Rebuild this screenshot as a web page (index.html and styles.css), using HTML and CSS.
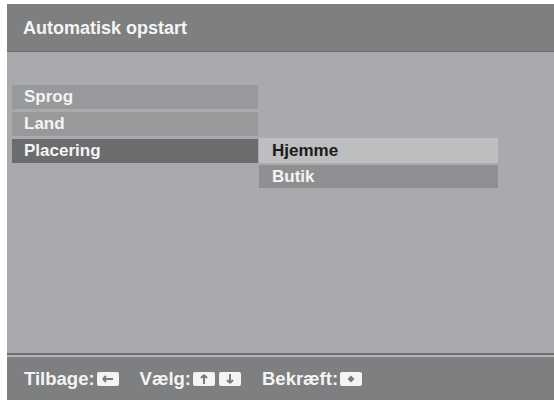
FILE: index.html
```html
<!DOCTYPE html>
<html lang="da">
<head>
    <meta charset="UTF-8">
    <meta name="viewport" content="width=device-width, initial-scale=1.0">
    <title>Automatisk opstart</title>
    <link rel="stylesheet" href="styles.css">
</head>
<body>
    <div class="screen">
        <div class="header">
            <h1>Automatisk opstart</h1>
        </div>
        <div class="content">
            <div class="menu">
                <div class="item">Sprog</div>
                <div class="item">Land</div>
                <div class="item selected">Placering</div>
            </div>
            <div class="submenu">
                <div class="option focus">Hjemme</div>
                <div class="option">Butik</div>
            </div>
        </div>
        <div class="divider"></div>
        <div class="footer">
            <span class="hint">Tilbage:<span class="key">
                <svg width="22" height="14" viewBox="0 0 22 14"><path d="M6 7h10M6 7l3-3M6 7l3 3" stroke="#7a7b7c" stroke-width="2" fill="none"/></svg>
            </span></span>
            <span class="hint">Vælg:<span class="key">
                <svg width="22" height="14" viewBox="0 0 22 14"><path d="M11 3v9M11 3l-3 3M11 3l3 3" stroke="#7a7b7c" stroke-width="2" fill="none"/></svg>
            </span><span class="key">
                <svg width="22" height="14" viewBox="0 0 22 14"><path d="M11 2v9M11 11l-3-3M11 11l3-3" stroke="#7a7b7c" stroke-width="2" fill="none"/></svg>
            </span></span>
            <span class="hint">Bekræft:<span class="key">
                <svg width="22" height="14" viewBox="0 0 22 14"><path d="M11 3.5l3.5 3.5-3.5 3.5-3.5-3.5z" fill="#7a7b7c"/></svg>
            </span></span>
        </div>
    </div>
</body>
</html>
```

FILE: styles.css
```css
body {
    margin: 0;
    background: #fff;
    font-family: "Liberation Sans", Arial, sans-serif;
    font-weight: bold;
}
.screen {
    margin: 4px 0 0 7px;
    height: 396px;
    display: flex;
    flex-direction: column;
}
.header {
    height: 48px;
    background: #7e7f80;
    border-bottom: 1px solid #6c6d6e;
    display: flex;
    align-items: center;
    padding: 2px 0 0 16px;
    box-sizing: border-box;
}
h1 {
    margin: 0;
    font-size: 18px;
    color: #f4f4f4;
}
.content {
    flex: 1;
    background: #a9aaad;
    display: flex;
    gap: 1px;
    padding: 33px 0 0 5px;
}
.menu {
    width: 246px;
    display: flex;
    flex-direction: column;
    gap: 3px;
}
.item {
    height: 24px;
    line-height: 24px;
    padding-left: 12px;
    font-size: 17px;
    color: #f4f4f4;
    background: #98999b;
}
.item.selected {
    background: #6b6c6d;
}
.submenu {
    width: 239px;
    margin-top: 53px;
    display: flex;
    flex-direction: column;
    gap: 2px;
}
.option {
    height: 23px;
    line-height: 23px;
    padding-left: 13px;
    font-size: 17px;
    color: #f4f4f4;
    background: #8e8f91;
}
.option.focus {
    height: 25px;
    line-height: 25px;
    background: #bdbebf;
    color: #1b1b1b;
}
.divider {
    height: 2px;
    background: #6e6f70;
    border-bottom: 2px solid #b4b5b6;
}
.footer {
    height: 43px;
    background: #7e7f80;
    display: flex;
    align-items: center;
    gap: 21px;
    padding-left: 17px;
    font-size: 18.5px;
    color: #f4f4f4;
}
.hint {
    display: flex;
    align-items: center;
}
.key {
    width: 22px;
    height: 14px;
    background: #f4f4f4;
    border-radius: 2px;
    margin-left: 2px;
    display: flex;
}
.key + .key {
    margin-left: 4px;
}
```
